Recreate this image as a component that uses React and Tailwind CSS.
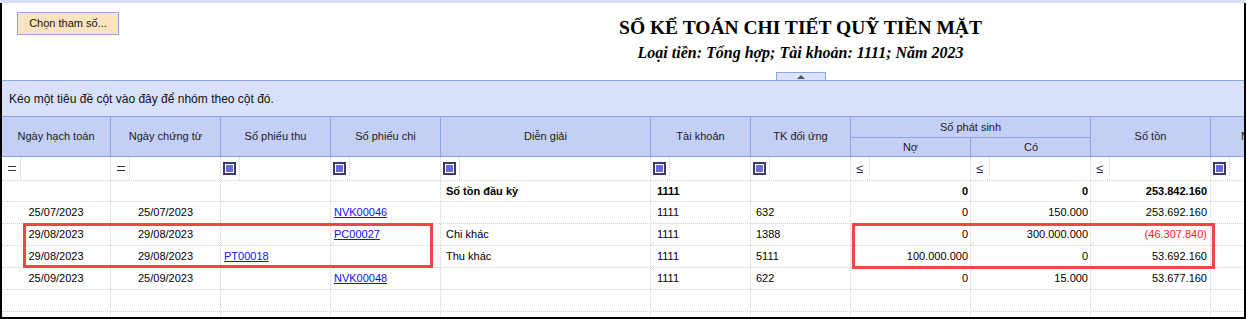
import React from 'react';

const widths = [
  'w-[109px]',
  'w-[110px]',
  'w-[110px]',
  'w-[110px]',
  'w-[210px]',
  'w-[100px]',
  'w-[100px]',
  'w-[120px]',
  'w-[120px]',
  'w-[120px]',
  'w-[140px]',
];

// kind of text alignment per column
const aligns = [
  'justify-center',
  'justify-center',
  'justify-start pl-[3px]',
  'justify-start pl-[3px]',
  'justify-start pl-[5px]',
  'justify-start pl-[6px]',
  'justify-start pl-[5px]',
  'justify-end pr-[2px]',
  'justify-end pr-[2px]',
  'justify-end pr-[3px]',
  'justify-start pl-[5px]',
];

const filters = ['eq', 'eq', 'box', 'box', 'box', 'box', 'box', 'le', 'le', 'le', 'box'];

const rows = [
  { bold: true, h: 'h-[21px]', cells: ['', '', '', '', 'Số tồn đầu kỳ', '1111', '', '0', '0', '253.842.160', ''] },
  { h: 'h-[22px]', cells: ['25/07/2023', '25/07/2023', '', 'NVK00046', '', '1111', '632', '0', '150.000', '253.692.160', ''] },
  { h: 'h-[22px]', cells: ['29/08/2023', '29/08/2023', '', 'PC00027', 'Chi khác', '1111', '1388', '0', '300.000.000', '(46.307.840)', ''] },
  { h: 'h-[22px]', cells: ['29/08/2023', '29/08/2023', 'PT00018', '', 'Thu khác', '1111', '5111', '100.000.000', '0', '53.692.160', ''] },
  { h: 'h-[22px]', cells: ['25/09/2023', '25/09/2023', '', 'NVK00048', '', '1111', '622', '0', '15.000', '53.677.160', ''] },
  { h: 'h-[22px]', cells: ['', '', '', '', '', '', '', '', '', '', ''] },
  { h: 'h-[22px]', cells: ['', '', '', '', '', '', '', '', '', '', ''] },
];

const FilterIcon = ({ kind }) => {
  if (kind === 'eq') {
    return (
      <svg width="8" height="5" viewBox="0 0 8 5" className="ml-[6px]">
        <line x1="0" y1="0.5" x2="8" y2="0.5" stroke="#333" strokeWidth="1" />
        <line x1="0" y1="4.5" x2="8" y2="4.5" stroke="#333" strokeWidth="1" />
      </svg>
    );
  }
  if (kind === 'le') {
    return <span className="ml-[5px] text-[13px] leading-none text-[#2f2f66]">≤</span>;
  }
  return (
    <span className="ml-[2px] w-[13px] h-[13px] border-2 border-[#3a3a6c] bg-white flex items-center justify-center">
      <span className="w-[7px] h-[7px] bg-[#6a6ad2]" />
    </span>
  );
};

const HeadCell = ({ w, label, last }) => (
  <div
    className={`${w} shrink-0 h-full flex items-center justify-center border-[#8ea5e5] ${
      last ? '' : 'border-r'
    }`}
  >
    <span className="whitespace-nowrap">{label}</span>
  </div>
);

export default function App() {
  return (
    <div className="relative w-[1246px] h-[319px] overflow-hidden bg-[#d9e0f9] pt-[3px] font-['Liberation_Sans',Arial,sans-serif] text-[11px] text-black">
      <div className="h-[316px] bg-white border-l-2 border-r-2 border-b-2 border-black flex flex-col overflow-hidden">
        {/* Report title */}
        <div className="h-[77px] shrink-0 flex">
          <div className="w-[355px] shrink-0 pl-[15px] pt-[9px]">
            <button className="w-[102px] h-[23px] bg-[#fbe3bf] border border-[#8ea5e5] flex items-center justify-center text-[11px] text-[#111]">
              Chọn tham số...
            </button>
          </div>
          <div className="flex-1 flex flex-col items-center pt-[13px] font-['Liberation_Serif','Times_New_Roman',serif] font-bold">
            <h1 className="text-[19.5px] leading-[23px] whitespace-nowrap">SỔ KẾ TOÁN CHI TIẾT QUỸ TIỀN MẶT</h1>
            <p className="mt-[4px] text-[16px] leading-[20px] italic whitespace-nowrap">
              Loại tiền: Tổng hợp; Tài khoản: 1111; Năm 2023
            </p>
            <div className="mt-auto w-[50px] h-[8px] bg-[#dde4f9] border-t border-l border-r border-[#8ea5e5] flex items-center justify-center">
              <span className="w-0 h-0 border-l-[4px] border-r-[4px] border-b-[4px] border-l-transparent border-r-transparent border-b-[#555]" />
            </div>
          </div>
        </div>

        {/* Group panel */}
        <div className="h-[36px] shrink-0 border-t border-[#8ea5e5] bg-[#d9e0f9] flex items-center pl-[7px] text-[12px] text-[#111]">
          Kéo một tiêu đề cột vào đây để nhóm theo cột đó.
        </div>

        {/* Column headers */}
        <div className="h-[41px] shrink-0 flex border-y border-[#8ea5e5] bg-[#c4cff6] text-[#1a1a1a]">
          <HeadCell w={widths[0]} label="Ngày hạch toán" />
          <HeadCell w={widths[1]} label="Ngày chứng từ" />
          <HeadCell w={widths[2]} label="Số phiếu thu" />
          <HeadCell w={widths[3]} label="Số phiếu chi" />
          <HeadCell w={widths[4]} label="Diễn giải" />
          <HeadCell w={widths[5]} label="Tài khoản" />
          <HeadCell w={widths[6]} label="TK đối ứng" />
          <div className="w-[240px] shrink-0 h-full flex flex-col border-r border-[#8ea5e5]">
            <div className="h-[21px] shrink-0 flex items-center justify-center border-b border-[#8ea5e5]">
              Số phát sinh
            </div>
            <div className="flex-1 flex">
              <HeadCell w={widths[7]} label="Nợ" />
              <HeadCell w="w-[120px]" label="Có" last />
            </div>
          </div>
          <HeadCell w={widths[9]} label="Số tồn" />
          <HeadCell w={widths[10]} label="Người nộp/nhận" last />
        </div>

        {/* Filter row */}
        <div className="h-[24px] shrink-0 flex border-b border-dotted border-[#cfcfcf]">
          {filters.map((f, i) => (
            <div key={i} className={`${widths[i]} shrink-0 h-full flex border-r border-dotted border-[#cfcfcf]`}>
              <div className="w-[19px] shrink-0 h-full flex items-center border-r border-dotted border-[#cfcfcf]">
                <FilterIcon kind={f} />
              </div>
            </div>
          ))}
        </div>

        {/* Data rows */}
        {rows.map((row, r) => (
          <div
            key={r}
            className={`${row.h} shrink-0 flex border-b border-dotted border-[#cfcfcf] ${row.bold ? 'font-bold' : ''}`}
          >
            {row.cells.map((c, i) => {
              const isLink = (i === 2 || i === 3) && c;
              const isNeg = c.startsWith('(');
              return (
                <div
                  key={i}
                  className={`${widths[i]} shrink-0 h-full flex items-center border-r border-dotted border-[#cfcfcf] ${aligns[i]}`}
                >
                  {isLink ? (
                    <span className="text-[#1010ff] underline">{c}</span>
                  ) : (
                    <span className={`whitespace-nowrap ${isNeg ? 'text-[#ff2020]' : ''}`}>{c}</span>
                  )}
                </div>
              );
            })}
          </div>
        ))}
      </div>

      {/* Highlight boxes */}
      <div className="absolute left-[23px] top-[223px] w-[410px] h-[45px] border-[3px] border-[#f24646] pointer-events-none" />
      <div className="absolute left-[852px] top-[223px] w-[363px] h-[46px] border-[3px] border-[#f24646] pointer-events-none" />
    </div>
  );
}
